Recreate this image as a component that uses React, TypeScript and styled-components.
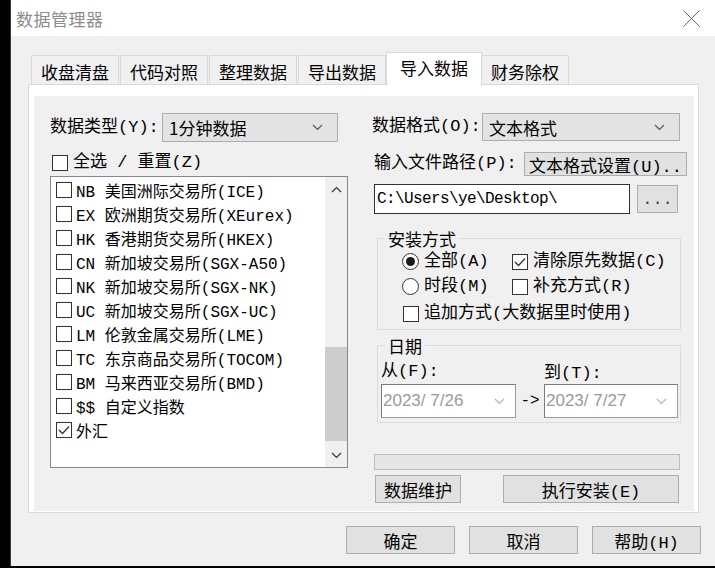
import React from "react";
import styled, { createGlobalStyle } from "styled-components";

const GlobalStyle = createGlobalStyle`
  html, body { margin: 0; padding: 0; background: #000; }
  body {
    font-family: "Liberation Mono", "Noto Sans CJK SC", monospace;
    color: #000;
  }
  * { box-sizing: border-box; }
`;

const Screen = styled.div`
  display: flex;
  width: 715px;
  height: 568px;
  background: #000;
  overflow: hidden;
`;

const Win = styled.div`
  margin-left: 10px;
  width: 705px;
  height: 566px;
  border-left: 1px solid #3a3a3a;
  background: #f0f0f0;
  display: flex;
  flex-direction: column;
`;

const TitleBar = styled.div`
  height: 36px;
  background: #fff;
  display: flex;
  align-items: center;
  padding: 0 15px 0 5px;
`;

const Title = styled.div`
  flex: 1;
  font-family: "Noto Sans CJK SC", sans-serif;
  font-size: 17px;
  color: #8c8c8c;
  letter-spacing: 0.5px;
`;

const Body = styled.div`
  flex: 1;
  display: flex;
  flex-direction: column;
  padding: 16px 16px 0 17px;
`;

const TabRow = styled.div`
  display: flex;
  align-items: flex-end;
  height: 32px;
  padding-left: 3px;
  position: relative;
  z-index: 1;
`;

const Tab = styled.div<{ active?: boolean }>`
  height: ${({ active }) => (active ? "34px" : "29px")};
  margin: ${({ active }) => (active ? "0 -1px -2px -1px" : "0 1px 0 0")};
  padding: 0 ${({ active }) => (active ? "13px" : "9px")};
  border: 1px solid #d9d9d9;
  border-bottom: none;
  background: ${({ active }) => (active ? "#fff" : "#f0f0f0")};
  font-family: "Noto Sans CJK SC", sans-serif;
  font-size: 17px;
  display: flex;
  align-items: center;
  padding-top: ${({ active }) => (active ? "0" : "2px")};
  padding-bottom: ${({ active }) => (active ? "4px" : "0")};
`;

const TabPanel = styled.div`
  height: 429px;
  border: 1px solid #d9d9d9;
  background: #fff;
  padding: 11px 4px 1px 5px;
  display: flex;
`;

const Inner = styled.div`
  flex: 1;
  background: #f0f0f0;
  display: grid;
  grid-template-columns: 298px 315px;
  column-gap: 24px;
  align-items: start;
  padding: 17px 0 0 16px;
`;

const Col = styled.div`
  display: flex;
  flex-direction: column;
`;

const Row = styled.div<{ mt?: number; ml?: number }>`
  display: flex;
  align-items: center;
  margin-top: ${({ mt }) => mt ?? 0}px;
  margin-left: ${({ ml }) => ml ?? 0}px;
`;

const Label = styled.span<{ w?: number }>`
  font-size: 17px;
  line-height: 20px;
  white-space: nowrap;
  width: ${({ w }) => (w ? `${w}px` : "auto")};
  flex-shrink: 0;
`;

const Combo = styled.div<{ w: number; h: number }>`
  width: ${({ w }) => w}px;
  height: ${({ h }) => h}px;
  background: #e3e3e3;
  border: 1px solid #adadad;
  display: flex;
  align-items: center;
  padding: 0 14px 0 6px;
  font-family: "Noto Sans CJK SC", sans-serif;
  font-size: 17px;
  justify-content: space-between;
`;

const DateCombo = styled.div<{ w: number }>`
  width: ${({ w }) => w}px;
  height: 34px;
  background: #fff;
  border: 1px solid #7a7a7a;
  border-right-color: #9a9a9a;
  border-bottom-color: #9a9a9a;
  display: flex;
  align-items: center;
  justify-content: space-between;
  padding: 0 10px 0 1px;
  font-family: "Liberation Sans", sans-serif;
  font-size: 17px;
  color: #9a9a9a;
`;

const Button = styled.div<{ w: number; h: number }>`
  width: ${({ w }) => w}px;
  height: ${({ h }) => h}px;
  background: #e1e1e1;
  border: 1px solid #adadad;
  display: flex;
  align-items: center;
  justify-content: center;
  font-size: 17px;
  white-space: nowrap;
  overflow: hidden;
  flex-shrink: 0;
`;

const TextInput = styled.div`
  width: 256px;
  height: 30px;
  background: #fff;
  border: 1px solid #333;
  display: flex;
  align-items: center;
  padding-left: 2px;
  font-size: 16px;
  letter-spacing: -0.6px;
`;

const Box = styled.span<{ size?: number }>`
  width: ${({ size }) => size ?? 16}px;
  height: ${({ size }) => size ?? 16}px;
  border: 1px solid #333;
  background: #fff;
  display: inline-flex;
  align-items: center;
  justify-content: center;
  flex-shrink: 0;
`;

const Radio = styled.span<{ on?: boolean }>`
  width: 17px;
  height: 17px;
  border-radius: 50%;
  border: 1px solid #333;
  background: #fff;
  display: inline-flex;
  align-items: center;
  justify-content: center;
  flex-shrink: 0;
  &::after {
    content: "";
    width: 9px;
    height: 9px;
    border-radius: 50%;
    background: ${({ on }) => (on ? "#1a1a1a" : "transparent")};
  }
`;

const Check = ({ on, size }: { on?: boolean; size?: number }) => (
  <Box size={size}>
    {on && (
      <svg width="12" height="10" viewBox="0 0 12 10">
        <path d="M1 5 L4.5 8.5 L11 1.5" fill="none" stroke="#333" strokeWidth="1.3" />
      </svg>
    )}
  </Box>
);

const Chevron = ({ up, color = "#555", w = 11 }: { up?: boolean; color?: string; w?: number }) => (
  <svg width={w} height="7" viewBox="0 0 11 7">
    <path
      d={up ? "M1 6 L5.5 1.5 L10 6" : "M1 1 L5.5 5.5 L10 1"}
      fill="none"
      stroke={color}
      strokeWidth="1.2"
    />
  </svg>
);

const ListBox = styled.div`
  margin-top: 3px;
  width: 298px;
  height: 292px;
  border: 1px solid #828790;
  background: #fff;
  display: flex;
`;

const Items = styled.div`
  flex: 1;
  padding: 1px 0 0 5px;
  display: flex;
  flex-direction: column;
`;

const Item = styled.div`
  height: 24px;
  display: flex;
  align-items: center;
  gap: 4px;
  font-size: 16px;
  white-space: nowrap;
`;

const ScrollBar = styled.div`
  width: 22px;
  background: #f0f0f0;
  display: flex;
  flex-direction: column;
`;

const ScrollArrow = styled.div`
  height: 24px;
  display: flex;
  align-items: center;
  justify-content: center;
`;

const Track = styled.div`
  flex: 1;
  display: flex;
  flex-direction: column;
  justify-content: flex-end;
  padding-bottom: 2px;
`;

const Thumb = styled.div`
  height: 94px;
  background: #cdcdcd;
`;

const Group = styled.fieldset<{ mt: number; h: number }>`
  margin: ${({ mt }) => mt}px 0 0 5px;
  width: 304px;
  height: ${({ h }) => h}px;
  border: 1px solid #dcdcdc;
  padding: 0;
  min-inline-size: 0;
`;

const Legend = styled.legend`
  font-family: "Noto Sans CJK SC", sans-serif;
  font-size: 17px;
  line-height: 17px;
  padding: 0 3px;
  margin-left: 7px;
`;

const OptGrid = styled.div`
  display: grid;
  grid-template-columns: 110px auto;
  grid-auto-rows: 25px;
  align-items: center;
  padding: 2px 0 0 24px;
`;

const Opt = styled.label<{ span?: boolean }>`
  display: flex;
  align-items: center;
  gap: 5px;
  font-size: 17px;
  line-height: 20px;
  white-space: nowrap;
  grid-column: ${({ span }) => (span ? "1 / span 2" : "auto")};
  margin-left: ${({ span }) => (span ? "1px" : "0")};
  margin-top: ${({ span }) => (span ? "4px" : "0")};
`;

const DateRow = styled.div`
  display: flex;
  align-items: flex-end;
  padding: 8px 0 0 3px;
`;

const DateCol = styled.div<{ lift: number }>`
  display: flex;
  flex-direction: column;
  gap: ${({ lift }) => lift}px;
`;

const Arrow = styled.span`
  width: 28px;
  height: 34px;
  display: flex;
  align-items: center;
  justify-content: center;
  font-size: 16px;
`;

const Progress = styled.div`
  margin: 31px 0 0 2px;
  width: 306px;
  height: 16px;
  background: #e6e6e6;
  border: 1px solid #bcbcbc;
`;

const Footer = styled.div`
  display: flex;
  justify-content: flex-end;
  gap: 14px;
  padding-top: 13px;
  margin-right: -2px;
`;

const exchanges = [
  "NB 美国洲际交易所(ICE)",
  "EX 欧洲期货交易所(XEurex)",
  "HK 香港期货交易所(HKEX)",
  "CN 新加坡交易所(SGX-A50)",
  "NK 新加坡交易所(SGX-NK)",
  "UC 新加坡交易所(SGX-UC)",
  "LM 伦敦金属交易所(LME)",
  "TC 东京商品交易所(TOCOM)",
  "BM 马来西亚交易所(BMD)",
  "$$ 自定义指数",
];

const tabs = ["收盘清盘", "代码对照", "整理数据", "导出数据", "导入数据", "财务除权"];

export default function App() {
  return (
    <Screen>
      <GlobalStyle />
      <Win>
        <TitleBar>
          <Title>数据管理器</Title>
          <svg width="17" height="17" viewBox="0 0 17 17">
            <path d="M0.5 0.5 L16.5 16.5 M16.5 0.5 L0.5 16.5" stroke="#555" strokeWidth="0.9" />
          </svg>
        </TitleBar>
        <Body>
          <TabRow>
            {tabs.map((t) => (
              <Tab key={t} active={t === "导入数据"}>
                {t}
              </Tab>
            ))}
          </TabRow>
          <TabPanel>
            <Inner>
              <Col>
                <Row>
                  <Label w={112}>数据类型(Y):</Label>
                  <Combo w={176} h={29}>
                    1分钟数据
                    <Chevron />
                  </Combo>
                </Row>
                <Row mt={11} ml={2}>
                  <Opt>
                    <Check size={16} />
                    全选 / 重置(Z)
                  </Opt>
                </Row>
                <ListBox>
                  <Items>
                    {exchanges.map((e) => (
                      <Item key={e}>
                        <Check />
                        {e}
                      </Item>
                    ))}
                    <Item>
                      <Check on />
                      外汇
                    </Item>
                  </Items>
                  <ScrollBar>
                    <ScrollArrow>
                      <Chevron up color="#333" w={11} />
                    </ScrollArrow>
                    <Track>
                      <Thumb />
                    </Track>
                    <ScrollArrow>
                      <Chevron color="#333" w={11} />
                    </ScrollArrow>
                  </ScrollBar>
                </ListBox>
              </Col>
              <Col>
                <Row>
                  <Label w={110}>数据格式(O):</Label>
                  <Combo w={198} h={28}>
                    文本格式
                    <Chevron />
                  </Combo>
                </Row>
                <Row mt={11} ml={2}>
                  <Label>输入文件路径(P):</Label>
                  <Button w={163} h={24} style={{ marginLeft: "auto" }}>
                    文本格式设置(U)..
                  </Button>
                </Row>
                <Row mt={8} ml={2}>
                  <TextInput>C:\Users\ye\Desktop\</TextInput>
                  <Button w={41} h={28} style={{ marginLeft: 7, color: "#444" }}>
                    ...
                  </Button>
                </Row>
                <Group mt={16} h={100}>
                  <Legend>安装方式</Legend>
                  <OptGrid>
                    <Opt>
                      <Radio on />
                      全部(A)
                    </Opt>
                    <Opt>
                      <Check on />
                      清除原先数据(C)
                    </Opt>
                    <Opt>
                      <Radio />
                      时段(M)
                    </Opt>
                    <Opt>
                      <Check />
                      补充方式(R)
                    </Opt>
                    <Opt span>
                      <Check />
                      追加方式(大数据里时使用)
                    </Opt>
                  </OptGrid>
                </Group>
                <Group mt={7} h={86}>
                  <Legend>日期</Legend>
                  <DateRow>
                    <DateCol lift={2}>
                      <Label>从(F):</Label>
                      <DateCombo w={135}>
                        2023/ 7/26
                        <Chevron color="#b5b5b5" />
                      </DateCombo>
                    </DateCol>
                    <Arrow>-&gt;</Arrow>
                    <DateCol lift={0}>
                      <Label>到(T):</Label>
                      <DateCombo w={134}>
                        2023/ 7/27
                        <Chevron color="#b5b5b5" />
                      </DateCombo>
                    </DateCol>
                  </DateRow>
                </Group>
                <Progress />
                <Row mt={5} ml={3}>
                  <Button w={86} h={28}>
                    数据维护
                  </Button>
                  <Button w={176} h={28} style={{ marginLeft: 42 }}>
                    执行安装(E)
                  </Button>
                </Row>
              </Col>
            </Inner>
          </TabPanel>
          <Footer>
            <Button w={109} h={28}>
              确定
            </Button>
            <Button w={109} h={28}>
              取消
            </Button>
            <Button w={109} h={28}>
              帮助(H)
            </Button>
          </Footer>
        </Body>
      </Win>
    </Screen>
  );
}
